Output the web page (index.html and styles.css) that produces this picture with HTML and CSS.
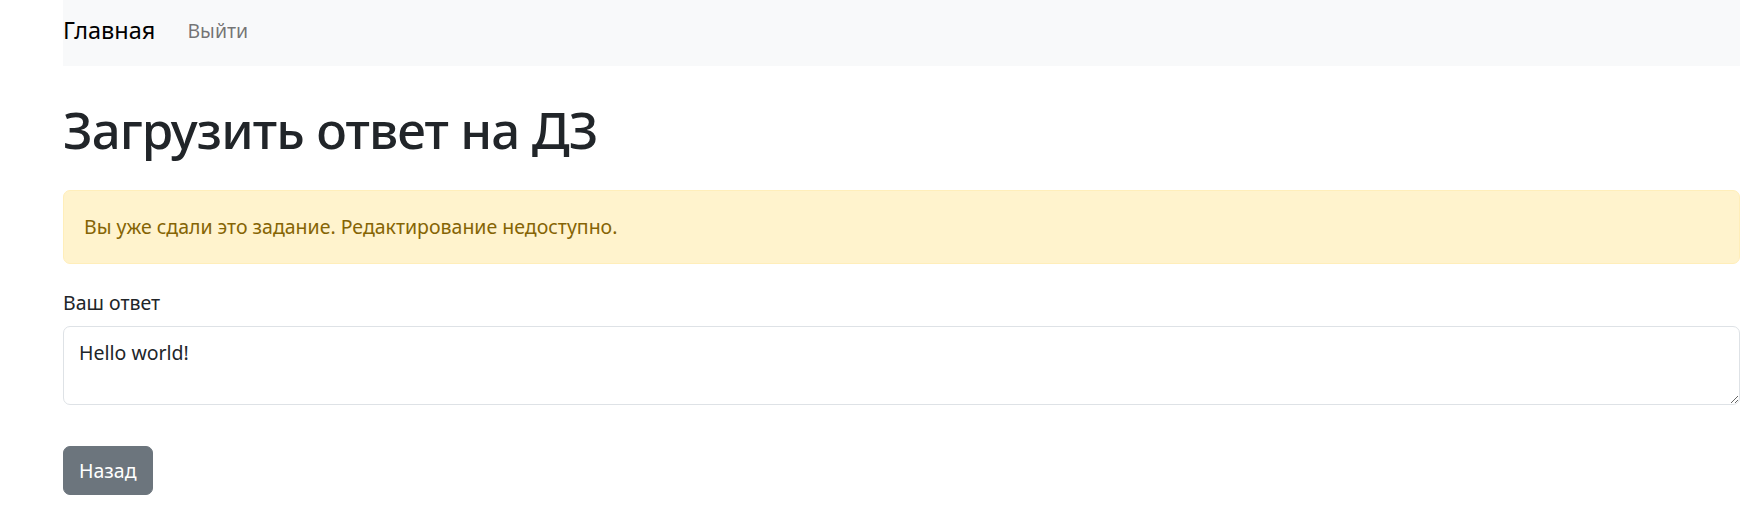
FILE: index.html
```html
<!DOCTYPE html>
<html lang="ru">
<head>
<meta charset="utf-8">
<title>Загрузить ответ на ДЗ</title>
<link rel="stylesheet" href="styles.css">
</head>
<body>
<div class="page">
  <nav class="navbar">
    <a class="brand" href="#">Главная</a>
    <a class="nav-link" href="#">Выйти</a>
  </nav>
  <main class="content">
    <h1 class="title">Загрузить ответ на ДЗ</h1>
    <div class="alert">Вы уже сдали это задание. Редактирование недоступно.</div>
    <form class="form">
      <label class="label" for="answer">Ваш ответ</label>
      <textarea class="textarea" id="answer" rows="2" readonly>Hello world!</textarea>
      <div class="actions">
        <a class="btn" href="#">Назад</a>
      </div>
    </form>
  </main>
</div>
</body>
</html>
```

FILE: styles.css
```css
* { box-sizing: border-box; }
html, body { margin: 0; padding: 0; background: #fff; }
body {
  font-family: "Noto Sans", "Open Sans", sans-serif;
  font-size: 19.5px;
  line-height: 1.5;
  color: #212529;
}
.page {
  padding: 0 23px 0 63px;
}
.navbar {
  background: #f8f9fa;
  height: 66px;
  display: flex;
  align-items: center;
  gap: 32px;
  padding-bottom: 4px;
}
.brand {
  font-size: 23.5px;
  color: #000;
  text-decoration: none;
}
.nav-link {
  font-size: 19.5px;
  color: rgba(0,0,0,.55);
  text-decoration: none;
}
.title {
  font-size: 51px;
  font-weight: 500;
  line-height: 1.2;
  letter-spacing: -0.9px;
  margin: 33px 0 30px;
}
.alert {
  background: #fff3cd;
  border: 1px solid #ffeeba;
  color: #856404;
  border-radius: 7px;
  padding: 21px 20px;
  line-height: 30px;
  margin-bottom: 24px;
}
.form { display: flex; flex-direction: column; align-items: flex-start; }
.label {
  display: block;
  line-height: 30px;
  margin-bottom: 8px;
}
.textarea {
  width: 100%;
  height: 79px;
  font: inherit;
  color: #212529;
  line-height: 30px;
  padding: 11px 15px 8px;
  border: 1px solid #dee2e6;
  border-radius: 7px;
  resize: vertical;
  outline: none;
}
.actions { margin-top: 41px; }
.btn {
  display: inline-block;
  background: #6c757d;
  color: #fff;
  text-decoration: none;
  border: 1px solid #6c757d;
  border-radius: 7px;
  padding: 8.5px 15px;
  line-height: 30px;
}
```
